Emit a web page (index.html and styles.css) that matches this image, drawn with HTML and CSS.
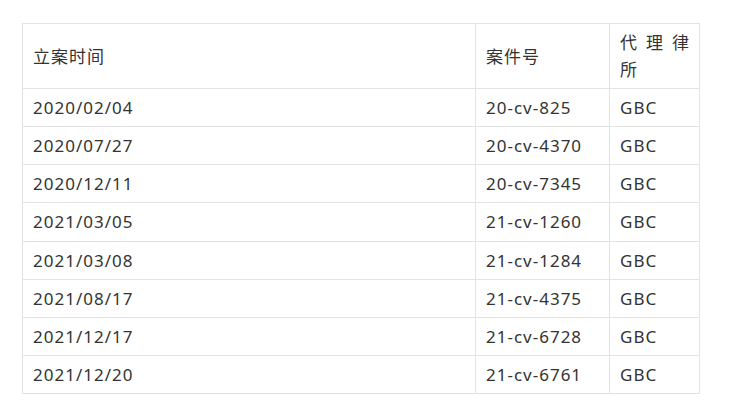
FILE: index.html
```html
<!DOCTYPE html>
<html lang="zh">
<head>
<meta charset="utf-8">
<link rel="stylesheet" href="styles.css">
</head>
<body>
<div class="wrap">
<table class="cases">
<colgroup><col class="c1"><col class="c2"><col class="c3"></colgroup>
<thead>
<tr><th>立案时间</th><th>案件号</th><th class="just">代 理 律 所</th></tr>
</thead>
<tbody>
<tr><td>2020/02/04</td><td>20-cv-825</td><td>GBC</td></tr>
<tr><td>2020/07/27</td><td>20-cv-4370</td><td>GBC</td></tr>
<tr><td>2020/12/11</td><td>20-cv-7345</td><td>GBC</td></tr>
<tr><td>2021/03/05</td><td>21-cv-1260</td><td>GBC</td></tr>
<tr><td>2021/03/08</td><td>21-cv-1284</td><td>GBC</td></tr>
<tr><td>2021/08/17</td><td>21-cv-4375</td><td>GBC</td></tr>
<tr><td>2021/12/17</td><td>21-cv-6728</td><td>GBC</td></tr>
<tr><td>2021/12/20</td><td>21-cv-6761</td><td>GBC</td></tr>
</tbody>
</table>
</div>
</body>
</html>
```
FILE: styles.css
```css
html, body { margin: 0; padding: 0; background: #fff; }
.wrap { padding: 23px 0 0 22px; }
.cases {
  border-collapse: collapse;
  width: 677px;
  table-layout: fixed;
  font-family: "Noto Sans", "Noto Sans CJK SC", sans-serif;
  font-size: 17px;
  letter-spacing: 1px;
  color: #333;
}
.c1 { width: 453px; }
.c2 { width: 134px; }
.c3 { width: 90px; }
.cases th, .cases td {
  border: 1px solid #e3e3e3;
  padding: 5px 10px;
  line-height: 27.1px;
  text-align: left;
  font-weight: normal;
  vertical-align: middle;
}
.cases th.just { text-align: justify; letter-spacing: 0; }
```
